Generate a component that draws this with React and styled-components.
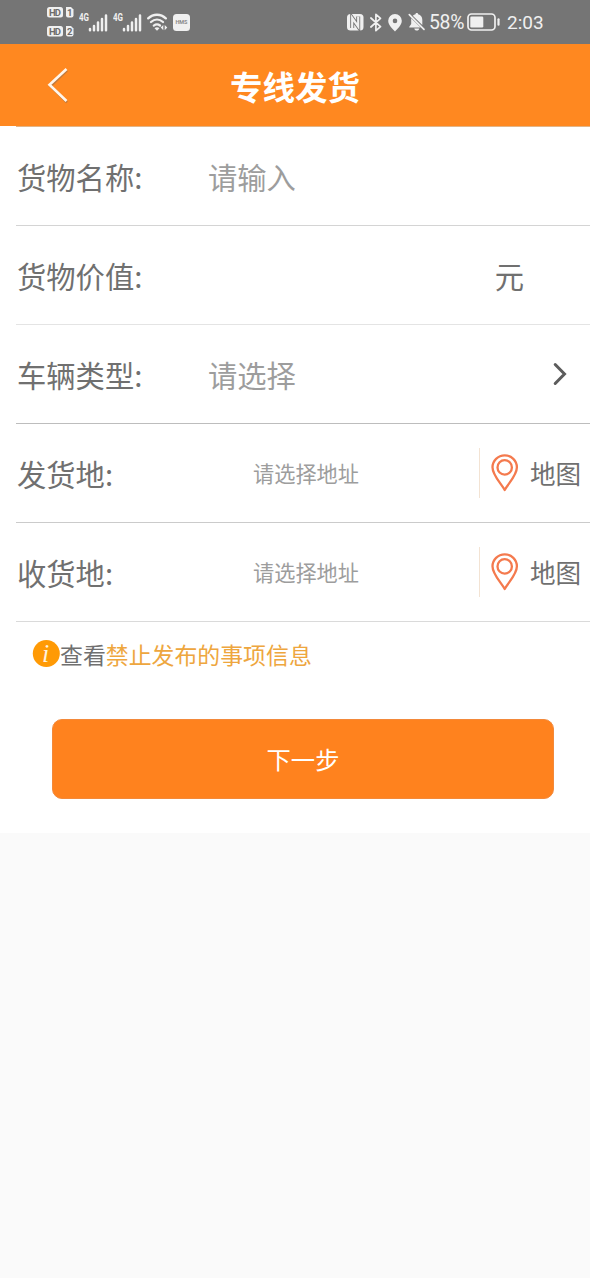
import React from "react";
import styled, { createGlobalStyle } from "styled-components";

const GlobalStyle = createGlobalStyle`
  * {
    box-sizing: border-box;
  }

  body {
    margin: 0;
    background: #fafafa;
    font-family: "Noto Sans CJK SC", "Noto Sans", sans-serif;
    color: #707070;
  }
`;

const SimBadge = ({ number }) => (
  <svg width="27" height="11" viewBox="0 0 27 11">
    <rect width="16" height="10.5" rx="2.5" fill="#f0f0f0" />
    <path d="M19 0h5l2.5 2.5v6a2 2 0 0 1-2 2H21a2 2 0 0 1-2-2z" fill="#f0f0f0" />
    <BadgeText x="8" y="8.8" textLength="12">HD</BadgeText>
    <BadgeText x="22.8" y="8.8">{number}</BadgeText>
  </svg>
);

const Signal = () => (
  <svg width="29" height="20" viewBox="0 0 29 20">
    <NetText x="0" y="9" textLength="10" lengthAdjust="spacingAndGlyphs">4G</NetText>
    <g stroke="#f0f0f0" strokeWidth="2.5" strokeLinecap="round">
      <path d="M11 18.2V17M15 18.2V14M19 18.2v-7.700M23 18.2V7M27 18.2V3.500" />
    </g>
  </svg>
);

const Wifi = () => (
  <svg width="21" height="18" viewBox="0 0 21 18">
    <g fill="none" stroke="#f0f0f0" strokeWidth="2.3" strokeLinecap="round">
      <path d="M1.2 5.400c5-4.900 12.600-4.900 17.600 0" />
      <path d="M4 9c3.600-3.200 8.400-3.200 12 0" />
      <path d="M6.800 12.600c2-1.500 4.300-1.500 6.200-.1" />
    </g>
    <path d="M7.500 15.200c1.500-1.200 3.500-1.200 5 0L10 17.700z" fill="#f0f0f0" />
    <path d="M16.300 12v5.200l-2.600-2.700zM17.700 12v5.200l2.600-2.700z" fill="#f0f0f0" />
  </svg>
);

const Hms = () => (
  <svg width="17" height="17" viewBox="0 0 17 17">
    <rect width="17" height="17" rx="3.500" fill="#f0f0f0" />
    <HmsText x="8.500" y="10.400" textLength="12">HMS</HmsText>
  </svg>
);

const Nfc = () => (
  <svg width="17" height="18" viewBox="0 0 17 18">
    <rect y="1" width="16.500" height="16.500" rx="3.500" fill="#f0f0f0" />
    <g fill="none">
      <path d="M5.200 15V5l6 8.500v-10" stroke="#757575" strokeWidth="4" />
      <path d="M5.200 15V5l6 8.500v-10" stroke="#f0f0f0" strokeWidth="2.200" />
    </g>
  </svg>
);

const Bluetooth = () => (
  <svg width="12" height="19" viewBox="0 0 12 19">
    <path
      d="M.9 5l9.600 8.700-4.600 4V1.300l4.600 4L.9 14"
      fill="none"
      stroke="#f0f0f0"
      strokeWidth="1.700"
      strokeLinejoin="round"
      strokeLinecap="round"
    />
  </svg>
);

const Location = () => (
  <svg width="14" height="20" viewBox="0 -2 14 20">
    <path
      d="M7 0a6.800 6.800 0 0 1 6.800 6.800C13.800 11.300 9 15.300 7 17.500 5 15.300.2 11.300.2 6.800A6.800 6.800 0 0 1 7 0zm0 4.600a2.300 2.300 0 1 0 0 4.600 2.300 2.300 0 0 0 0-4.600z"
      fill="#f0f0f0"
      fillRule="evenodd"
    />
  </svg>
);

const Muted = () => (
  <svg width="18" height="18" viewBox="0 0 18 18">
    {/* right side of the bell, then the part left under the slash */}
    <path d="M4.800 2.800C5.600 2 6.500 1.500 7.500 1.300 7.500.5 8 0 8.800 0s1.300.5 1.300 1.300c2.700.6 4.200 2.800 4.200 5.400v5.200z" fill="#f0f0f0" />
    <path d="M3.200 5.200L12.600 14.600H1.300v-.9l1.900-2.700zM6.300 15.500h5c-.3 1.400-1.200 2.100-2.500 2.100s-2.200-.7-2.500-2.100z" fill="#f0f0f0" />
    <path d="M1.300 1.700l14.700 14.600" stroke="#f0f0f0" strokeWidth="1.700" strokeLinecap="round" />
  </svg>
);

const Battery = () => (
  <svg width="34" height="18" viewBox="0 0 34 18">
    <rect x="1" y="1" width="27" height="16" rx="3.500" fill="none" stroke="#f0f0f0" strokeWidth="1.700" />
    <rect x="3.300" y="3.500" width="13" height="11" rx="1.300" fill="#f0f0f0" />
    <path d="M31.500 6.300v5.400" stroke="#f0f0f0" strokeWidth="2.200" strokeLinecap="round" />
  </svg>
);

const Back = () => (
  <svg width="22" height="38" viewBox="0 0 22 38">
    <g fill="none" strokeWidth="2.600">
      <path d="M20 4.300L3.500 20 20 36.300" stroke="#c27a3c" />
      <path d="M19.500 3L2.500 18.800l17 16.200" stroke="#fff6ec" />
    </g>
  </svg>
);

const Chevron = () => (
  <svg width="14" height="24" viewBox="0 0 14 24">
    <path
      d="M2.200 2.500l9.300 9.500-9.300 9.500"
      fill="none"
      stroke="#5c5c5c"
      strokeWidth="3"
      strokeLinecap="round"
    />
  </svg>
);

const MapPin = () => (
  <svg width="28" height="38" viewBox="0 0 28 38">
    <g fill="none" stroke="#f47a4e" strokeWidth="2.300" strokeLinejoin="round">
      <path d="M13.700 36C10.200 29.500 1.500 21.500 1.500 13.300a12.200 12 0 0 1 24.400 0C25.900 21.500 17.200 29.500 13.700 36z" />
      <circle cx="13.700" cy="13.400" r="7.200" />
    </g>
  </svg>
);

const Info = () => (
  <svg width="28" height="28" viewBox="0 0 28 28">
    <circle cx="14.300" cy="13.500" r="13.500" fill="#ff9a05" />
    <InfoText x="13.500" y="22">i</InfoText>
  </svg>
);

const AddressRow = ({ label, line }) => (
  <Row $line={line}>
    <Label>{label}</Label>
    <Address>请选择地址</Address>
    <MapButton>
      <MapPin />
      <MapText>地图</MapText>
    </MapButton>
  </Row>
);

const App = () => {
  return (
    <>
      <GlobalStyle />
      <StatusBar>
        <StatusGroup>
          <Sims>
            <SimBadge number="1" />
            <SimBadge number="2" />
          </Sims>
          <Signal />
          <Signal />
          <Wifi />
          <Hms />
        </StatusGroup>
        <StatusGroup $right>
          <Nfc />
          <Bluetooth />
          <Location />
          <Muted />
          <Percent>58%</Percent>
          <Battery />
          <Time>2:03</Time>
        </StatusGroup>
      </StatusBar>
      <Header>
        <BackButton aria-label="返回">
          <Back />
        </BackButton>
        <Title>专线发货</Title>
      </Header>
      <Main>
        <Form>
          <Row $line="#d4d4d4">
            <Label>货物名称:</Label>
            <Placeholder>请输入</Placeholder>
          </Row>
          <Row $line="#e4e4e4">
            <Label>货物价值:</Label>
            <Unit>元</Unit>
          </Row>
          <Row $line="#bdbdbd">
            <Label>车辆类型:</Label>
            <Placeholder>请选择</Placeholder>
            <Chevron />
          </Row>
          <AddressRow label="发货地:" line="#cbcbcb" />
          <AddressRow label="收货地:" line="#dadada" />
        </Form>
        <Notice>
          <Info />
          <span>查看</span>
          <NoticeLink>禁止发布的事项信息</NoticeLink>
        </Notice>
        <NextButton>下一步</NextButton>
      </Main>
    </>
  );
};

const BadgeText = styled.text`
  font: bold 9.5px "Roboto", sans-serif;
  fill: #6c6c6c;
  text-anchor: middle;
`;

const NetText = styled.text`
  font: bold 11px "Roboto", sans-serif;
  fill: #f0f0f0;
`;

const HmsText = styled.text`
  font: bold 5.5px "Roboto", sans-serif;
  fill: #8a8a8a;
  text-anchor: middle;
`;

const InfoText = styled.text`
  font: italic 26px "Liberation Serif", serif;
  fill: #fff3df;
  text-anchor: middle;
`;

const StatusBar = styled.div`
  display: flex;
  justify-content: space-between;
  height: 44px;
  padding: 0 47px;
  background: #757575;
`;

const StatusGroup = styled.div`
  display: flex;
  align-items: center;
  gap: ${(props) => (props.$right ? "6px" : "5px")};
`;

const Sims = styled.div`
  display: flex;
  flex-direction: column;
  gap: 8px;
`;

const Percent = styled.span`
  width: 34px;
  margin: 1px -1px 0 -4px;
  color: #f0f0f0;
  font: 19.4px "Roboto", sans-serif;
  letter-spacing: -0.3px;
  text-indent: 1px;
`;

const Time = styled.span`
  width: 36px;
  margin-top: 1px;
  color: #f0f0f0;
  font: 19px "Roboto", sans-serif;
`;

const Header = styled.header`
  display: grid;
  grid-template-columns: 100px 1fr 100px;
  align-items: center;
  height: 82px;
  background: #ff8820;
`;

const BackButton = styled.button`
  display: flex;
  padding: 0 0 0 47px;
  border: 0;
  background: none;
`;

const Title = styled.h1`
  margin: 1px 0 0;
  font-size: 32.5px;
  line-height: 48px;
  text-align: center;
  color: #fff;
`;

const Main = styled.main`
  height: 707px;
  background: #fff;
`;

const Form = styled.div`
  margin-left: 16px;
  border-top: 1px solid #e3b587;
`;

const Row = styled.div`
  display: flex;
  align-items: center;
  height: 99px;
  border-bottom: 1px solid ${(props) => props.$line};

  > svg {
    margin-right: 23px;
  }
`;

const Label = styled.label`
  width: 192px;
  padding: 0 0 1px 1px;
  font-size: 29.3px;
  line-height: 44px;
`;

const Placeholder = styled.span`
  flex: 1;
  padding-bottom: 1px;
  font-size: 29.3px;
  line-height: 44px;
  color: #9d9d9d;
`;

const Unit = styled.span`
  margin-left: auto;
  padding: 0 66px 1px 0;
  font-size: 29.3px;
  line-height: 44px;
`;

const Address = styled.span`
  flex: 1;
  padding: 0 0 0 45px;
  font-size: 21.2px;
  line-height: 32px;
  color: #9d9d9d;
`;

const MapButton = styled.div`
  display: flex;
  align-items: center;
  gap: 11px;
  width: 111px;
  height: 50px;
  padding-left: 11px;
  border-left: 1px solid #f3e3d3;
`;

const MapText = styled.span`
  font-size: 25.6px;
  line-height: 38px;
  white-space: nowrap;
`;

const Notice = styled.div`
  display: flex;
  align-items: center;
  height: 64px;
  padding-left: 32px;
  font-size: 22.9px;
`;

const NoticeLink = styled.a`
  color: #eea63e;
`;

const NextButton = styled.button`
  display: block;
  width: 502px;
  height: 80px;
  margin: 33px 0 0 52px;
  padding: 0 0 2px;
  border: 1px solid #f3893a;
  border-radius: 10px;
  background: #ff821e;
  color: #fff;
  font-family: inherit;
  font-size: 24.3px;
`;

export default App;
